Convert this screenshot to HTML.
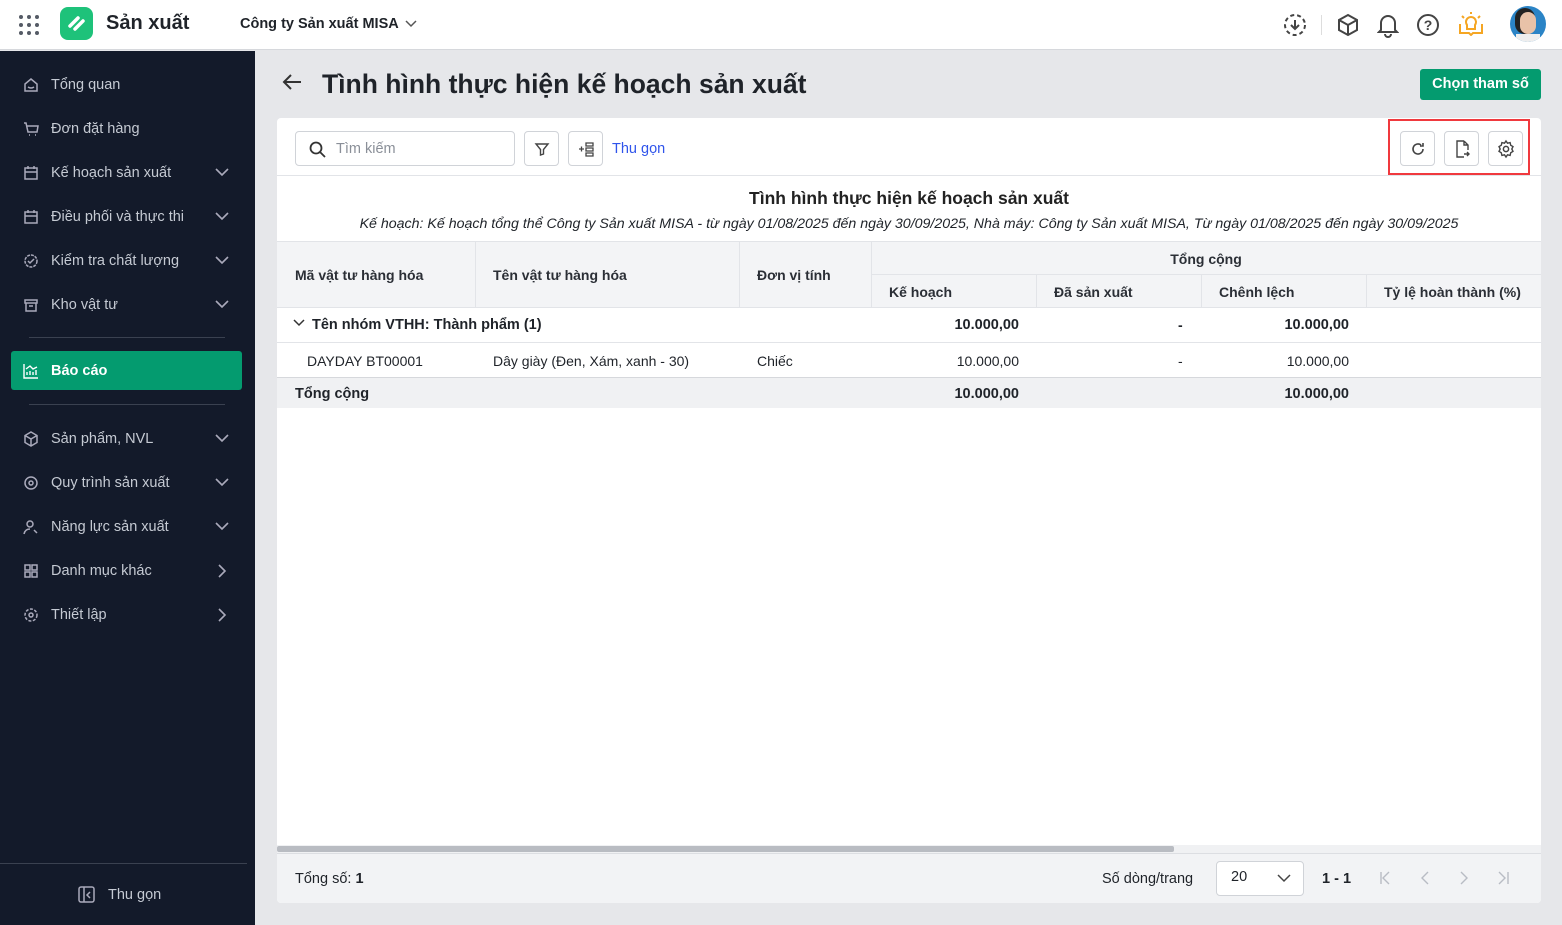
<!DOCTYPE html>
<html><head><meta charset="utf-8"><style>
*{box-sizing:border-box;margin:0;padding:0}
body{width:1562px;height:925px;overflow:hidden;font-family:"Liberation Sans",sans-serif;background:#e6e7ea;position:relative;color:#1f2329;font-size:14px}
.top{position:absolute;left:0;top:0;width:1562px;height:50px;background:#fff;border-bottom:1px solid #d6d8dc}
.side{position:absolute;left:0;top:51px;width:255px;height:874px;background:#131a2a;color:#c5cad3}
.nav{position:absolute;left:23px;height:20px;display:flex;align-items:center;font-size:14.5px;width:210px}
.nav svg{margin-right:12px}
.chev{position:absolute;right:-8px;top:4px}
.abs{position:absolute}
.card{position:absolute;left:277px;top:118px;width:1264px;height:785px;background:#fff;border-radius:4px;overflow:hidden}
.btn{position:absolute;width:35px;height:35px;border:1px solid #d0d3d8;border-radius:4px;display:flex;align-items:center;justify-content:center;background:#fff}
.th{position:absolute;font-weight:bold;font-size:14px;color:#2b2f36}
.vl{position:absolute;width:1px;background:#e2e4e8}
.hl{position:absolute;height:1px;background:#e2e4e8}
</style></head><body>
<div class="top">
 <svg class="abs" style="left:18px;top:14px" width="22" height="22"><g fill="#555b66"><circle cx="3" cy="3" r="2"/><circle cx="11" cy="3" r="2"/><circle cx="19" cy="3" r="2"/><circle cx="3" cy="11" r="2"/><circle cx="11" cy="11" r="2"/><circle cx="19" cy="11" r="2"/><circle cx="3" cy="19" r="2"/><circle cx="11" cy="19" r="2"/><circle cx="19" cy="19" r="2"/></g></svg>
 <div class="abs" style="left:60px;top:7px;width:33px;height:33px;border-radius:8px;background:#1ec27a"><svg width="33" height="33"><path d="M10 19l8-8M15 22l8-8" stroke="#fff" stroke-width="3.5" stroke-linecap="round"/></svg></div>
 <div class="abs" style="left:106px;top:12px;font-size:20px;font-weight:bold">Sản xuất</div>
 <div class="abs" style="left:240px;top:16px;font-size:14.5px;font-weight:bold">Công ty Sản xuất MISA <svg width="12" height="8" style="margin-left:3px"><path d="M1 1l5 5 5-5" stroke="#555" stroke-width="1.5" fill="none"/></svg></div>
 <svg class="abs" style="left:1283px;top:13px" width="24" height="24"><circle cx="12" cy="12" r="10" fill="none" stroke="#444" stroke-width="2" stroke-dasharray="4 3"/><path d="M12 7v9M8 12l4 4 4-4" stroke="#444" stroke-width="2" fill="none"/></svg>
 <div class="abs" style="left:1321px;top:15px;width:1px;height:20px;background:#ddd"></div>
 <svg class="abs" style="left:1337px;top:13px" width="22" height="24"><path d="M11 2l9 5v10l-9 5-9-5V7zM2 7l9 5 9-5M11 12v10" stroke="#444" stroke-width="2" fill="none"/></svg>
 <svg class="abs" style="left:1377px;top:12px" width="22" height="26"><path d="M4 18V11a7 7 0 0114 0v7l2 2H2zM8 22a3 3 0 006 0" stroke="#444" stroke-width="2" fill="none"/></svg>
 <svg class="abs" style="left:1416px;top:13px" width="24" height="24"><circle cx="12" cy="12" r="10" fill="none" stroke="#444" stroke-width="2"/><text x="12" y="17" font-size="14" font-weight="bold" text-anchor="middle" fill="#444" font-family="Liberation Sans">?</text></svg>
 <svg class="abs" style="left:1458px;top:10px" width="26" height="26"><path d="M2 14v9h9l2 2 2-2h9v-9M9 15a5 5 0 118 0v4H9z M13 2v2M4 6l2 2M22 6l-2 2" stroke="#f5a623" stroke-width="2" fill="none"/></svg>
 <div class="abs" style="left:1510px;top:6px;width:36px;height:36px;border-radius:50%;background:#2b84c6;overflow:hidden"><div style="position:absolute;left:10px;top:6px;width:16px;height:22px;border-radius:8px;background:#e8c2a8;box-shadow:-3px -2px 0 2px #222"></div><div style="position:absolute;left:6px;top:28px;width:24px;height:10px;background:#eee"></div></div>
</div>
<div class="side">
 <div class="nav" style="top:24px"><svg width="16" height="16"><path d="M2 7l6-5 6 5v7H2zM5 10q3 2 6 0" stroke="#aab" stroke-width="1.5" fill="none"/></svg>Tổng quan</div>
 <div class="nav" style="top:68px"><svg width="16" height="16"><path d="M1 2h2l2 9h9l1-6H4M6 14h1M12 14h1" stroke="#aab" stroke-width="1.5" fill="none"/></svg>Đơn đặt hàng</div>
 <div class="nav" style="top:112px"><svg width="16" height="16"><rect x="2" y="3" width="12" height="11" stroke="#aab" stroke-width="1.5" fill="none"/><path d="M2 7h12M5 1v3M11 1v3" stroke="#aab" stroke-width="1.5"/></svg>Kế hoạch sản xuất<svg class="chev" width="14" height="10"><path d="M1 2l6 6 6-6" stroke="#aab" stroke-width="1.6" fill="none"/></svg></div>
 <div class="nav" style="top:156px"><svg width="16" height="16"><rect x="2" y="3" width="12" height="11" stroke="#aab" stroke-width="1.5" fill="none"/><path d="M2 7h12M5 1v3M11 1v3" stroke="#aab" stroke-width="1.5"/></svg>Điều phối và thực thi<svg class="chev" width="14" height="10"><path d="M1 2l6 6 6-6" stroke="#aab" stroke-width="1.6" fill="none"/></svg></div>
 <div class="nav" style="top:200px"><svg width="16" height="16"><circle cx="8" cy="8" r="6" stroke="#aab" stroke-width="1.5" fill="none" stroke-dasharray="3 1"/><path d="M5 8l2 2 4-4" stroke="#aab" stroke-width="1.5" fill="none"/></svg>Kiểm tra chất lượng<svg class="chev" width="14" height="10"><path d="M1 2l6 6 6-6" stroke="#aab" stroke-width="1.6" fill="none"/></svg></div>
 <div class="nav" style="top:244px"><svg width="16" height="16"><path d="M2 3h12v3H2zM3 6v8h10V6M6 9h4" stroke="#aab" stroke-width="1.5" fill="none"/></svg>Kho vật tư<svg class="chev" width="14" height="10"><path d="M1 2l6 6 6-6" stroke="#aab" stroke-width="1.6" fill="none"/></svg></div>
 <div class="abs" style="left:29px;top:286px;width:196px;height:1px;background:#3a4150"></div>
 <div class="abs" style="left:11px;top:300px;width:231px;height:39px;background:#049b6f;border-radius:3px;color:#fff;font-size:14.5px;font-weight:bold;padding:12px 0 0 40px">Báo cáo
  <svg class="abs" style="left:12px;top:12px" width="16" height="16"><path d="M1 1v14h14M4 12V9M7 12V8M10 12V9M13 12V7M3 6l4-3 3 3 4-2" stroke="#fff" stroke-width="1.4" fill="none"/></svg></div>
 <div class="abs" style="left:29px;top:353px;width:196px;height:1px;background:#3a4150"></div>
 <div class="nav" style="top:378px"><svg width="16" height="16"><path d="M8 1l6 3.5v7L8 15l-6-3.5v-7zM2 4.5L8 8l6-3.5M8 8v7" stroke="#aab" stroke-width="1.5" fill="none"/></svg>Sản phẩm, NVL<svg class="chev" width="14" height="10"><path d="M1 2l6 6 6-6" stroke="#aab" stroke-width="1.6" fill="none"/></svg></div>
 <div class="nav" style="top:422px"><svg width="16" height="16"><circle cx="8" cy="8" r="6" stroke="#aab" stroke-width="1.5" fill="none"/><circle cx="8" cy="8" r="2" stroke="#aab" stroke-width="1.5" fill="none"/></svg>Quy trình sản xuất<svg class="chev" width="14" height="10"><path d="M1 2l6 6 6-6" stroke="#aab" stroke-width="1.6" fill="none"/></svg></div>
 <div class="nav" style="top:466px"><svg width="16" height="16"><circle cx="7" cy="5" r="3" stroke="#aab" stroke-width="1.5" fill="none"/><path d="M1 15q1-5 6-5M11 11l3 3" stroke="#aab" stroke-width="1.5" fill="none"/></svg>Năng lực sản xuất<svg class="chev" width="14" height="10"><path d="M1 2l6 6 6-6" stroke="#aab" stroke-width="1.6" fill="none"/></svg></div>
 <div class="nav" style="top:510px"><svg width="16" height="16"><path d="M2 2h5v5H2zM9 2h5v5H9zM2 9h5v5H2zM9 9h5v5H9z" stroke="#aab" stroke-width="1.5" fill="none"/></svg>Danh mục khác<svg class="chev" style="top:3px;right:-6px" width="10" height="14"><path d="M2 1l6 6-6 6" stroke="#aab" stroke-width="1.6" fill="none"/></svg></div>
 <div class="nav" style="top:554px"><svg width="16" height="16"><circle cx="8" cy="8" r="6" stroke="#aab" stroke-width="1.5" fill="none" stroke-dasharray="3 1.5"/><circle cx="8" cy="8" r="2" stroke="#aab" stroke-width="1.5" fill="none"/></svg>Thiết lập<svg class="chev" style="top:3px;right:-6px" width="10" height="14"><path d="M2 1l6 6-6 6" stroke="#aab" stroke-width="1.6" fill="none"/></svg></div>
 <div class="abs" style="left:0;top:812px;width:247px;height:1px;background:#3a4150"></div>
 <div class="abs" style="left:78px;top:835px;font-size:14.5px;display:flex;align-items:center"><svg width="18" height="18" style="margin-right:12px"><rect x="1" y="1" width="15" height="15" rx="2" stroke="#aab" stroke-width="1.5" fill="none"/><path d="M6 1v15M12 6l-3 3 3 3" stroke="#aab" stroke-width="1.5" fill="none"/></svg>Thu gọn</div>
</div>
<svg class="abs" style="left:281px;top:72px" width="22" height="20"><path d="M20 10H3M10 3l-7 7 7 7" stroke="#333" stroke-width="2" fill="none"/></svg>
<div class="abs" style="left:322px;top:69px;font-size:26.5px;font-weight:bold">Tình hình thực hiện kế hoạch sản xuất</div>
<div class="abs" style="left:1420px;top:69px;width:121px;height:31px;background:#049b6f;border-radius:3px;color:#fff;font-weight:bold;font-size:14.5px;text-align:center;line-height:31px">Chọn tham số</div>
<div class="card">
 <div class="abs" style="left:18px;top:13px;width:220px;height:35px;border:1px solid #d0d3d8;border-radius:4px;color:#8a8f98;font-size:14.5px;padding:9px 0 0 40px">Tìm kiếm<svg class="abs" style="left:13px;top:9px" width="18" height="18"><circle cx="7" cy="7" r="5.5" stroke="#333" stroke-width="1.8" fill="none"/><path d="M11 11l5 5" stroke="#333" stroke-width="1.8"/></svg></div>
 <div class="btn" style="left:247px;top:13px"><svg width="16" height="16"><path d="M2 3h12l-4.5 5.5V13l-3 1V8.5z" stroke="#444" stroke-width="1.4" fill="none"/></svg></div>
 <div class="btn" style="left:291px;top:13px"><svg width="18" height="18"><path d="M2 9h5M4.5 6.5v5M9 3h7v3H9zM9 8h7v3H9zM9 13h7v3H9z" stroke="#444" stroke-width="1.3" fill="none"/></svg></div>
 <div class="abs" style="left:335px;top:23px;color:#2f54eb;font-size:14.5px">Thu gọn</div>
 <div class="abs" style="left:1111px;top:1px;width:142px;height:56px;border:2px solid #f0393e"></div>
 <div class="btn" style="left:1123px;top:13px"><svg width="16" height="16"><path d="M13 8a5 5 0 11-2-4M13 2v3h-3" stroke="#444" stroke-width="1.6" fill="none"/></svg></div>
 <div class="btn" style="left:1167px;top:13px"><svg width="16" height="18"><path d="M10 1H3v16h7M10 1l4 4v5M10 1v4h4M10 14h5M13 12l2 2-2 2" stroke="#444" stroke-width="1.4" fill="none"/></svg></div>
 <div class="btn" style="left:1211px;top:13px"><svg width="20" height="20"><path d="M10 2l1.5 2.2 2.6-.6.6 2.6 2.3 1.4-1.2 2.4 1.2 2.4-2.3 1.4-.6 2.6-2.6-.6L10 18l-1.5-2.2-2.6.6-.6-2.6-2.3-1.4L4.2 10 3 7.6l2.3-1.4.6-2.6 2.6.6z" stroke="#444" stroke-width="1.4" fill="none"/><circle cx="10" cy="10" r="2.6" stroke="#444" stroke-width="1.5" fill="none"/></svg></div>
 <div class="hl" style="left:0;top:57px;width:1264px"></div>
 <div class="abs" style="left:0;top:70px;width:1264px;text-align:center;font-size:17.5px;font-weight:bold;color:#222">Tình hình thực hiện kế hoạch sản xuất</div>
 <div class="abs" style="left:0;top:98px;width:1264px;text-align:center;font-size:14.2px;font-style:italic">Kế hoạch: Kế hoạch tổng thể Công ty Sản xuất MISA - từ ngày 01/08/2025 đến ngày 30/09/2025, Nhà máy: Công ty Sản xuất MISA, Từ ngày 01/08/2025 đến ngày 30/09/2025</div>
 <div class="abs" style="left:0;top:123px;width:1264px;height:66px;background:#f3f4f6"></div>
 <div class="hl" style="left:0;top:123px;width:1264px"></div>
 <div class="hl" style="left:594px;top:156px;width:670px"></div>
 <div class="hl" style="left:0;top:189px;width:1264px"></div>
 <div class="vl" style="left:198px;top:123px;height:66px"></div>
 <div class="vl" style="left:462px;top:123px;height:66px"></div>
 <div class="vl" style="left:594px;top:123px;height:66px"></div>
 <div class="vl" style="left:759px;top:156px;height:33px"></div>
 <div class="vl" style="left:924px;top:156px;height:33px"></div>
 <div class="vl" style="left:1089px;top:156px;height:33px"></div>
 <div class="th" style="left:18px;top:149px">Mã vật tư hàng hóa</div>
 <div class="th" style="left:216px;top:149px">Tên vật tư hàng hóa</div>
 <div class="th" style="left:480px;top:149px">Đơn vị tính</div>
 <div class="th" style="left:594px;top:133px;width:670px;text-align:center">Tổng cộng</div>
 <div class="th" style="left:612px;top:166px">Kế hoạch</div>
 <div class="th" style="left:777px;top:166px">Đã sản xuất</div>
 <div class="th" style="left:942px;top:166px">Chênh lệch</div>
 <div class="th" style="left:1107px;top:166px">Tỷ lệ hoàn thành (%)</div>
 <svg class="abs" style="left:16px;top:201px" width="12" height="8"><path d="M1 1l5 5 5-5" stroke="#333" stroke-width="1.5" fill="none"/></svg>
 <div class="abs" style="left:35px;top:199px;font-weight:bold;font-size:14.5px">Tên nhóm VTHH: Thành phẩm (1)</div>
 <div class="abs" style="left:600px;top:199px;width:142px;text-align:right;font-weight:bold;font-size:14.5px">10.000,00</div>
 <div class="abs" style="left:901px;top:199px;font-weight:bold">-</div>
 <div class="abs" style="left:930px;top:199px;width:142px;text-align:right;font-weight:bold;font-size:14.5px">10.000,00</div>
 <div class="hl" style="left:0;top:224px;width:1264px"></div>
 <div class="abs" style="left:30px;top:235px">DAYDAY BT00001</div>
 <div class="abs" style="left:216px;top:235px">Dây giày (Đen, Xám, xanh - 30)</div>
 <div class="abs" style="left:480px;top:235px">Chiếc</div>
 <div class="abs" style="left:600px;top:235px;width:142px;text-align:right">10.000,00</div>
 <div class="abs" style="left:901px;top:235px">-</div>
 <div class="abs" style="left:930px;top:235px;width:142px;text-align:right">10.000,00</div>
 <div class="abs" style="left:0;top:259px;width:1264px;height:31px;background:#f0f1f3;border-top:1px solid #d6d8dc"></div>
 <div class="abs" style="left:18px;top:268px;font-weight:bold;font-size:14.5px">Tổng cộng</div>
 <div class="abs" style="left:600px;top:268px;width:142px;text-align:right;font-weight:bold;font-size:14.5px">10.000,00</div>
 <div class="abs" style="left:930px;top:268px;width:142px;text-align:right;font-weight:bold;font-size:14.5px">10.000,00</div>
 <div class="abs" style="left:0;top:727px;width:1264px;height:8px;background:#f0f1f3"></div>
 <div class="abs" style="left:0;top:728px;width:897px;height:6px;background:#b9bcc2;border-radius:2px"></div>
 <div class="abs" style="left:0;top:735px;width:1264px;height:50px;background:#f2f3f5;border-top:1px solid #dcdee2"></div>
 <div class="abs" style="left:18px;top:753px;font-size:14.5px">Tổng số: <b>1</b></div>
 <div class="abs" style="left:825px;top:753px;font-size:14.5px">Số dòng/trang</div>
 <div class="abs" style="left:939px;top:743px;width:88px;height:35px;background:#fff;border:1px solid #d0d3d8;border-radius:4px;padding:7px 0 0 14px;font-size:14.5px">20<svg class="abs" style="right:12px;top:12px" width="14" height="9"><path d="M1 1l6 6 6-6" stroke="#444" stroke-width="1.5" fill="none"/></svg></div>
 <div class="abs" style="left:1045px;top:753px;font-weight:bold;font-size:14.5px">1 - 1</div>
 <svg class="abs" style="left:1100px;top:753px" width="140" height="14"><g stroke="#b8bcc4" stroke-width="1.4" fill="none"><path d="M4 1v12M12 1l-6 6 6 6"/><path d="M51 1l-6 6 6 6"/><path d="M84 1l6 6-6 6"/><path d="M122 1l6 6-6 6M131 1v12"/></g></svg>
</div>
</body></html>
